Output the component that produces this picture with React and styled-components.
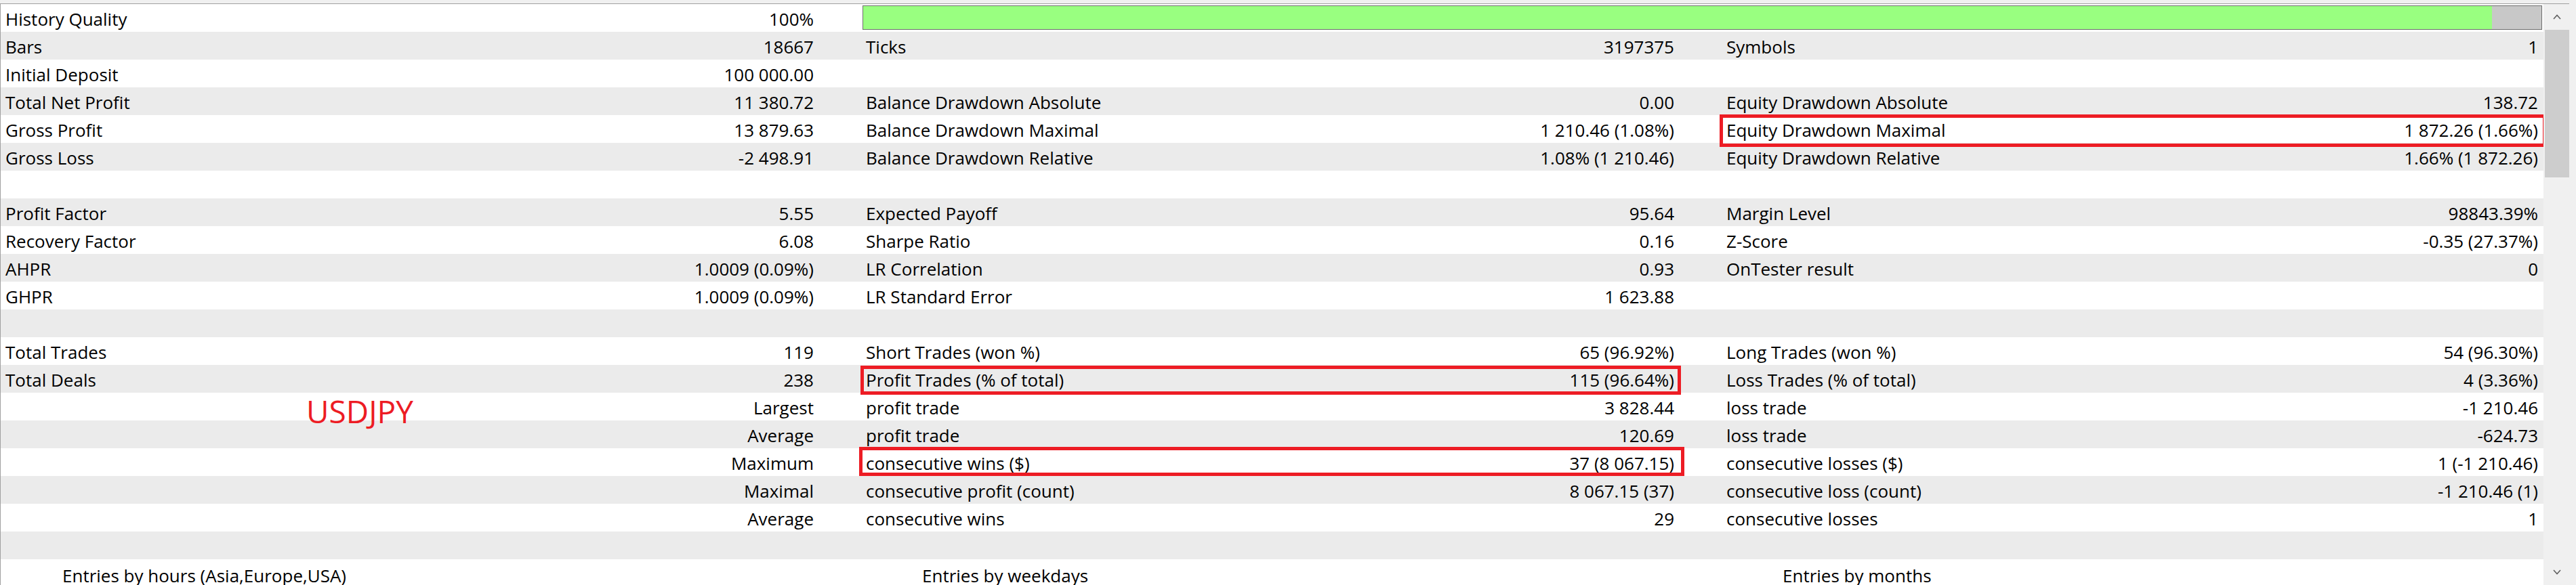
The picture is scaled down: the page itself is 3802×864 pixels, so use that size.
import React from "react";
import styled, { createGlobalStyle } from "styled-components";

const Global = createGlobalStyle`
  html, body { margin: 0; padding: 0; width: 3802px; height: 864px; overflow: hidden; background: #f0f0f0; }
  body { font-family: "Open Sans", "Noto Sans", sans-serif; color: #000; }
  * { box-sizing: border-box; }
`;

const Page = styled.div`
  width: 3802px;
  height: 864px;
  display: flex;
  flex-direction: column;
  background: #f0f0f0;
  overflow: hidden;
`;

const TopStrip = styled.div`
  height: 6px;
  flex: 0 0 6px;
  background: #f0f0f0;
  border-bottom: 1px solid #a0a0a0;
  margin-right: 10px;
`;

const Body = styled.div`
  flex: 1;
  display: flex;
  min-height: 0;
`;

const Table = styled.div`
  flex: 0 0 3754px;
  display: flex;
  flex-direction: column;
  background: #fff;
  border-left: 1px solid #a0a0a0;
  overflow: hidden;
`;

const Row = styled.div`
  flex: 0 0 41px;
  height: 41px;
  display: grid;
  grid-template-columns: 1269px 1270px 1214px;
  background: ${(p) => (p.$alt ? "#ebebeb" : "#ffffff")};
  font-size: 26px;
  position: relative;
`;

const Cell = styled.div`
  position: relative;
  display: flex;
  align-items: center;
  justify-content: space-between;
  padding: 3px ${(p) => p.$pr}px 0 ${(p) => p.$pl}px;
  white-space: nowrap;
  min-width: 0;
`;

const Label = styled.span``;
const Value = styled.span``;

const BarCell = styled.div`
  grid-column: 2 / span 2;
  display: flex;
  padding: 2px 2px 3px 3px;
`;

const Bar = styled.div`
  flex: 1;
  display: flex;
  border: 1px solid #6e6e6e;
  background: #c8c8c8;
`;

const BarFill = styled.div`
  width: ${(p) => p.$pct}%;
  background: #99ff80;
`;

const HeaderCell = styled.div`
  display: flex;
  align-items: center;
  padding: 6px 0 0 91px;
  white-space: nowrap;
`;

const Mark = styled.span`
  position: absolute;
  top: ${(p) => p.$t}px;
  right: ${(p) => p.$r}px;
  bottom: ${(p) => p.$b}px;
  left: ${(p) => p.$l}px;
  border: 5px solid #ed1c24;
  pointer-events: none;
  z-index: 2;
`;

const Annotation = styled.span`
  position: absolute;
  left: 451px;
  top: -4px;
  font-size: 46px;
  color: #ed1c24;
  z-index: 2;
`;

const ScrollBar = styled.div`
  flex: 0 0 38px;
  display: flex;
  flex-direction: column;
  background: #f0f0f0;
  padding-left: 2px;
`;

const ArrowBtn = styled.div`
  flex: 0 0 38px;
  display: flex;
  align-items: center;
  justify-content: center;
  color: #606060;
`;

const Thumb = styled.div`
  flex: 0 0 218px;
  background: #cdcdcd;
`;

const Track = styled.div`
  flex: 1;
`;

const Edge = styled.div`
  flex: 1;
  background: #f0f0f0;
`;

const Chevron = ({ up }) => (
  <svg width="12" height="8" viewBox="0 0 12 8">
    <path
      d={up ? "M1 7 L6 1.5 L11 7" : "M1 1 L6 6.5 L11 1"}
      fill="none"
      stroke="#606060"
      strokeWidth="1.6"
    />
  </svg>
);

const rows = [
  ["Bars", "18667", "Ticks", "3197375", "Symbols", "1"],
  ["Initial Deposit", "100 000.00", "", "", "", ""],
  ["Total Net Profit", "11 380.72", "Balance Drawdown Absolute", "0.00", "Equity Drawdown Absolute", "138.72"],
  ["Gross Profit", "13 879.63", "Balance Drawdown Maximal", "1 210.46 (1.08%)", "Equity Drawdown Maximal", "1 872.26 (1.66%)", { col: 3, t: -1, r: -4, b: -6, l: -2 }],
  ["Gross Loss", "-2 498.91", "Balance Drawdown Relative", "1.08% (1 210.46)", "Equity Drawdown Relative", "1.66% (1 872.26)"],
  null,
  ["Profit Factor", "5.55", "Expected Payoff", "95.64", "Margin Level", "98843.39%"],
  ["Recovery Factor", "6.08", "Sharpe Ratio", "0.16", "Z-Score", "-0.35 (27.37%)"],
  ["AHPR", "1.0009 (0.09%)", "LR Correlation", "0.93", "OnTester result", "0"],
  ["GHPR", "1.0009 (0.09%)", "LR Standard Error", "1 623.88", "", ""],
  null,
  ["Total Trades", "119", "Short Trades (won %)", "65 (96.92%)", "Long Trades (won %)", "54 (96.30%)"],
  ["Total Deals", "238", "Profit Trades (% of total)", "115 (96.64%)", "Loss Trades (% of total)", "4 (3.36%)", { col: 2, t: 1, r: 59, b: -3, l: 0 }],
  ["", "Largest", "profit trade", "3 828.44", "loss trade", "-1 210.46", null, true],
  ["", "Average", "profit trade", "120.69", "loss trade", "-624.73"],
  ["", "Maximum", "consecutive wins ($)", "37 (8 067.15)", "consecutive losses ($)", "1 (-1 210.46)", { col: 2, t: -2, r: 54, b: 0, l: -2 }],
  ["", "Maximal", "consecutive profit (count)", "8 067.15 (37)", "consecutive loss (count)", "-1 210.46 (1)"],
  ["", "Average", "consecutive wins", "29", "consecutive losses", "1"],
  null,
];

const pads = [
  { pl: 7, pr: 69 },
  { pl: 8, pr: 69 },
  { pl: 8, pr: 8 },
];

export default function App() {
  return (
    <Page>
      <Global />
      <TopStrip />
      <Body>
        <Table>
          <Row $alt={false}>
            <Cell $pl={pads[0].pl} $pr={pads[0].pr}>
              <Label>History Quality</Label>
              <Value>100%</Value>
            </Cell>
            <BarCell>
              <Bar>
                <BarFill $pct={97.06} />
              </Bar>
            </BarCell>
          </Row>
          {rows.map((r, i) => {
            const alt = i % 2 === 0;
            if (!r) return <Row key={i} $alt={alt} />;
            const mark = r[6];
            return (
              <Row key={i} $alt={alt}>
                {[0, 1, 2].map((c) => (
                  <Cell key={c} $pl={pads[c].pl} $pr={pads[c].pr}>
                    {c === 0 && r[7] && <Annotation>USDJPY</Annotation>}
                    <Label>{r[c * 2]}</Label>
                    <Value>{r[c * 2 + 1]}</Value>
                    {mark && mark.col === c + 1 && (
                      <Mark $t={mark.t} $r={mark.r} $b={mark.b} $l={mark.l} />
                    )}
                  </Cell>
                ))}
              </Row>
            );
          })}
          <Row $alt={false}>
            <HeaderCell>Entries by hours (Asia,Europe,USA)</HeaderCell>
            <HeaderCell>Entries by weekdays</HeaderCell>
            <HeaderCell>Entries by months</HeaderCell>
          </Row>
        </Table>
        <ScrollBar>
          <ArrowBtn>
            <Chevron up />
          </ArrowBtn>
          <Thumb />
          <Track />
          <ArrowBtn>
            <Chevron />
          </ArrowBtn>
        </ScrollBar>
        <Edge />
      </Body>
    </Page>
  );
}
